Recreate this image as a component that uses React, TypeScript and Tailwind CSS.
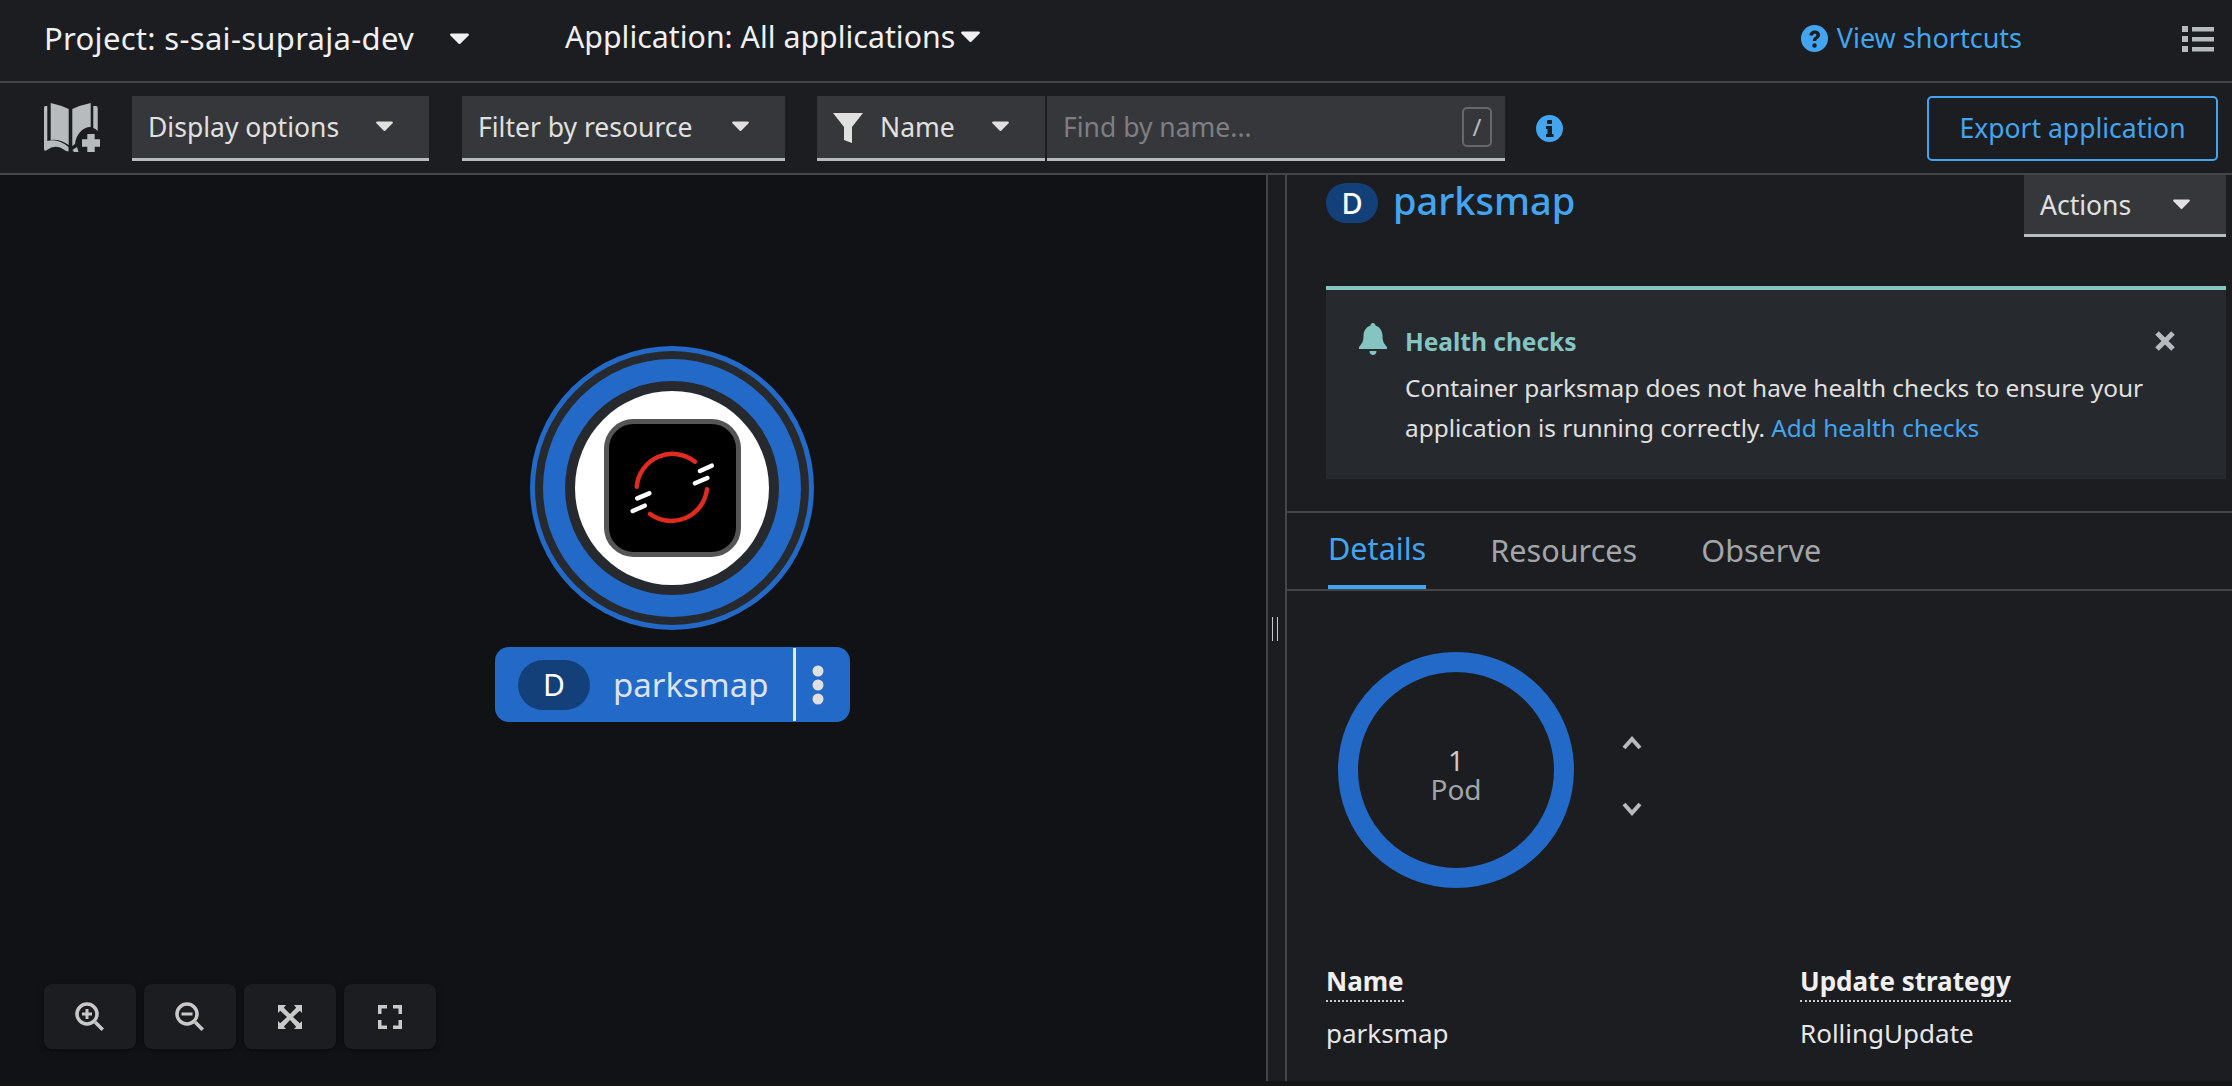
import React from "react";

const Caret = ({ c = "#e0e0e0", w = 16 }: { c?: string; w?: number }) => (
  <svg width={w} height={w * 0.62} viewBox="0 0 16 10"><path d="M1 0.5h14a1 1 0 0 1 .7 1.7L8.700 9.200a1 1 0 0 1-1.400 0L.3 2.200A1 1 0 0 1 1 .5z" fill={c} /></svg>
);

const Select = ({ label, w, icon }: { label: string; w: string; icon?: React.ReactNode }) => (
  <div className={`flex h-[65px] items-center justify-between border-b-[3px] border-[#b8bbbe] bg-[#36373b] pl-4 pr-[36px] text-[#e0e0e0] ${w}`}>
    <span className="flex items-center pt-[3px]">{icon}{label}</span>
    <Caret w={17} />
  </div>
);

const ZoomBtn = ({ children }: { children: React.ReactNode }) => (
  <div className="flex h-[65px] w-[92px] items-center justify-center rounded-lg bg-[#1b1d21] shadow-[0_2px_6px_rgba(0,0,0,0.4)]">
    <svg width="30" height="30" viewBox="0 0 30 30" fill="#c9c9c9">{children}</svg>
  </div>
);

export default function App() {
  return (
    <div className="flex h-[1086px] w-[2232px] flex-col overflow-hidden bg-[#101215] font-['Noto_Sans',sans-serif] text-[26.500px] text-[#e0e0e0]">
      {/* masthead */}
      <div className="flex h-[83px] shrink-0 items-center border-b-2 border-[#444548] bg-[#1b1d21] pb-[4px] text-[#f0f0f0]">
        <span className="ml-[44px] w-[406px] text-[31px] tracking-[0.3px]">Project: s-sai-supraja-dev</span>
        <Caret c="#f0f0f0" w={19} />
        <span className="ml-[96px] -mt-[3px] text-[30.300px]">Application: All applications</span>
        <span className="ml-[6px] -mt-[3px]"><Caret c="#f0f0f0" w={19} /></span>
        <div className="ml-auto flex items-center text-[27px] text-[#43a5f0]">
          <svg width="27" height="27" viewBox="0 0 27 27"><circle cx="13.500" cy="13.500" r="13.500" fill="#43a5f0" /><path d="M8.500 10.500c0-6.500 10.500-6.500 10.500-.5 0 3.500-3.800 3.500-3.800 6h-3.400c0-4 3.600-4 3.600-6 0-1.800-3.400-1.800-3.400.5z" fill="#1b1d21" /><circle cx="13.500" cy="20.500" r="2.200" fill="#1b1d21" /></svg>
          <span className="ml-[9px]">View shortcuts</span>
        </div>
        <svg className="ml-[160px] mr-[18px]" width="32" height="26" viewBox="0 0 32 26" fill="#b8bbbe"><rect x="0" y="0" width="6" height="6" /><rect x="10" y="1" width="22" height="4.500" /><rect x="0" y="10" width="6" height="6" /><rect x="10" y="11" width="22" height="4.500" /><rect x="0" y="20" width="6" height="6" /><rect x="10" y="21" width="22" height="4.500" /></svg>
      </div>

      {/* toolbar */}
      <div className="flex h-[92px] shrink-0 items-center border-b-2 border-[#444548] bg-[#1b1d21]">
        <svg className="ml-[44px]" width="56" height="50" viewBox="0 0 56 50" fill="#b8bbbe">
          <path d="M0 4.500Q0 3 1.500 3H3.300V38Q14 35 24.500 44V48.500L22 48Q12 40 3 47Q0 49 0 46Z" />
          <path d="M6.700 0Q16 2 24.700 6V42Q16 36 6.700 37Z" />
          <path d="M28.300 6Q37 2 46.700 0V24C38 24 32 32 31 41L28.300 43Z" />
          <path d="M49.300 3H52Q53.700 3 53.700 5V28Q51.500 25.500 49.300 25Z" />
          <path d="M28.500 47L33 44L34.500 49H30Z" />
          <path d="M43.300 31h7.400v5.300H56v7.400h-5.300V49h-7.400v-5.300H38v-7.400h5.300z" />
        </svg>
        <div className="ml-[32px]"><Select label="Display options" w="w-[297px]" /></div>
        <div className="ml-[33px]"><Select label="Filter by resource" w="w-[323px]" /></div>
        <div className="ml-[32px] flex items-center gap-[2px]">
          <Select
            label="Name"
            w="w-[228px]"
            icon={
              <svg className="mr-[17px]" width="30" height="30" viewBox="0 0 30 30" fill="#e0e0e0"><path d="M0 0h30L19 14v16l-8-3V14z" /></svg>
            }
          />
          <div className="flex h-[65px] w-[458px] items-center justify-between border-b-[3px] border-[#b8bbbe] bg-[#36373b] pl-4 pr-[13px] text-[#7d7f83]">
            <span className="pt-[3px]">Find by name...</span>
            <span className="flex h-[40px] w-[30px] items-center justify-center rounded-[5px] border-2 border-[#66686b] text-[24px] text-[#b8bbbe]">/</span>
          </div>
        </div>
        <svg className="ml-[31px]" width="27" height="27" viewBox="0 0 27 27"><circle cx="13.500" cy="13.500" r="13.500" fill="#43a5f0" /><rect x="11" y="5" width="5" height="4" rx="1" fill="#1b1d21" /><path d="M10 11h6v8h1.500v3h-7.500v-3h1.500v-5h-1.500z" fill="#1b1d21" /></svg>
        <div className="ml-auto mr-[14px] flex h-[65px] w-[291px] items-center justify-center rounded-[5px] border-2 border-[#43a5f0] pt-[2px] text-[#43a5f0]">Export application</div>
      </div>

      {/* main */}
      <div className="flex min-h-0 flex-1">
        {/* canvas */}
        <div className="relative w-[1268px] shrink-0 border-r-2 border-[#444548] bg-[#101215]">
          <svg className="absolute left-[530px] top-[171px]" width="284" height="284" viewBox="0 0 284 284">
            <circle cx="142" cy="142" r="142" fill="#2269c8" />
            <circle cx="142" cy="142" r="137" fill="#26292d" />
            <circle cx="142" cy="142" r="129" fill="#2269c8" />
            <circle cx="142" cy="142" r="107" fill="#26292d" />
            <circle cx="142" cy="142" r="97" fill="#ffffff" />
            <rect x="76.500" y="75.500" width="132" height="133" rx="27" fill="#000" stroke="#555" strokeWidth="5" />
            <path d="M106.700 140.700A36 36 0 0 1 165 115.700" fill="none" stroke="#e02b20" strokeWidth="4.500" strokeLinecap="round" />
            <path d="M177 143.300A36 36 0 0 1 120 168" fill="none" stroke="#e02b20" strokeWidth="4.500" strokeLinecap="round" />
            <path d="M170 125L181.700 119.700M165 137.300L177.300 132M107.300 152.300L119.300 147.300M102.700 165L114.700 159.700" stroke="#fff" strokeWidth="4.500" strokeLinecap="round" />
          </svg>

          <div className="absolute left-[495px] top-[472px] flex h-[75px] w-[355px] items-center rounded-[14px] bg-[#2269c8]">
            <span className="ml-[23px] flex h-[50px] w-[72px] items-center justify-center rounded-full bg-[#134078] text-[30px] text-white">D</span>
            <span className="ml-[23px] w-[180px] text-[33px] text-[#dde3ec]">parksmap</span>
            <span className="h-[73px] w-[3px] bg-[#e8e8e8]" />
            <svg className="ml-[16px]" width="12" height="40" viewBox="0 0 12 40" fill="#e0e0e0"><circle cx="6" cy="6" r="5.500" /><circle cx="6" cy="20" r="5.500" /><circle cx="6" cy="34" r="5.500" /></svg>
          </div>

          <div className="absolute bottom-[32px] left-[44px] flex gap-2">
            <ZoomBtn>
              <circle cx="12" cy="12" r="10" fill="none" stroke="#c9c9c9" strokeWidth="3.500" />
              <path d="M7 10.500h3.500V7h3v3.500H17v3h-3.500V17h-3v-3.500H7z" />
              <path d="M19 21.500l2.500-2.500L29 26.500 26.500 29z" />
            </ZoomBtn>
            <ZoomBtn>
              <circle cx="12" cy="12" r="10" fill="none" stroke="#c9c9c9" strokeWidth="3.500" />
              <rect x="6.500" y="10.500" width="11" height="3" />
              <path d="M19 21.500l2.500-2.500L29 26.500 26.500 29z" />
            </ZoomBtn>
            <ZoomBtn>
              <path d="M3 3h8L8.800 5.700 15 12l6.200-6.300L19 3h8v8l-2.200-2.200L18 15l6.800 6.200L27 19v8h-8l2.200-2.200L15 18l-6.200 6.800L11 27H3v-8l2.200 2.200L12 15 5.200 8.800 3 11z" />
            </ZoomBtn>
            <ZoomBtn>
              <path d="M3 3h9v3.500H6.500V12H3zM18 3h9v9h-3.500V6.500H18zM3 18h3.500v5.500H12V27H3zM23.500 18H27v9h-9v-3.500h5.500z" />
            </ZoomBtn>
          </div>
        </div>

        {/* splitter */}
        <div className="relative w-[17px] shrink-0 bg-[#1b1d21]">
          <div className="absolute left-[4px] top-[442px] flex h-[24px] gap-[4px]">
            <span className="h-full w-[1px] bg-[#c9c9c9]" />
            <span className="h-full w-[1px] bg-[#c9c9c9]" />
          </div>
        </div>

        {/* side panel */}
        <div className="flex min-w-0 flex-1 flex-col border-l-2 border-[#444548] bg-[#1b1d21]">
          <div className="flex h-[111px] shrink-0 items-start pl-[39px] pr-[6px]">
            <span className="mt-[8px] flex h-[40px] w-[52px] items-center justify-center rounded-full bg-[#134078] text-[29px] font-medium text-white">D</span>
            <span className="ml-[15px] text-[38px] font-medium leading-[50px] text-[#43a5f0]">parksmap</span>
            <div className="ml-auto flex h-[62px] w-[202px] items-center justify-between border-b-[3px] border-[#b8bbbe] bg-[#36373b] pl-4 pr-[36px] text-[#e0e0e0]">
              <span className="pt-[2px]">Actions</span>
              <Caret w={17} />
            </div>
          </div>

          <div className="ml-[39px] mr-[6px] flex h-[193px] shrink-0 items-start border-t-4 border-[#84c5c2] bg-[#26292d] pl-[33px] pr-[44px] pt-[33px] text-[24.400px]">
            <svg width="28" height="32" viewBox="0 0 28 32" fill="#84c5c2"><path d="M14 0c1.500 0 2.400 1 2.400 2.500C21 4 23.500 8 23.500 13c0 6 2 8 4.500 11v2H0v-2c2.500-3 4.500-5 4.500-11 0-5 2.500-9 7-10.500C11.500 1 12.500 0 14 0z" /><path d="M10.500 28h7c0 2.500-1.500 4-3.500 4s-3.500-1.500-3.500-4z" /></svg>
            <div className="ml-[18px] min-w-0 flex-1">
              <div className="text-[24.500px] font-bold leading-[38px] text-[#84c5c2]">Health checks</div>
              <div className="mt-[7px] leading-[40px] text-[#e0e0e0]">Container parksmap does not have health checks to ensure your</div>
              <div className="leading-[40px] text-[#e0e0e0]">application is running correctly. <span className="text-[#43a5f0]">Add health checks</span></div>
            </div>
            <svg className="mr-[7px] mt-[8px]" width="20" height="20" viewBox="0 0 20 20" stroke="#b8bbbe" strokeWidth="5"><path d="M2 2l16 16M18 2L2 18" /></svg>
          </div>

          <div className="mt-[32px] flex h-[80px] shrink-0 items-stretch gap-[64px] border-y-2 border-[#444548] pl-[41px] text-[30.600px] text-[#a3a5a8]">
            <div className="flex items-center border-b-4 border-[#43a5f0] text-[#43a5f0]">Details</div>
            <div className="flex items-center">Resources</div>
            <div className="flex items-center">Observe</div>
          </div>

          <div className="flex h-[371px] shrink-0 items-start pl-[51px] pt-[61px]">
            <div className="relative h-[236px] w-[236px] shrink-0 rounded-full border-[20px] border-[#2269c8]">
              <div className="absolute inset-0 flex flex-col items-center justify-center pt-[10px] text-[28px] leading-[29px] text-[#c9c9c9]">
                <span>1</span>
                <span className="text-[#a3a5a8]">Pod</span>
              </div>
            </div>
            <div className="ml-[48px] mt-[84px] flex flex-col gap-[52px]">
              <svg width="20" height="14" viewBox="0 0 20 14" fill="none" stroke="#b8bbbe" strokeWidth="4"><path d="M2 12l8-9 8 9" /></svg>
              <svg width="20" height="14" viewBox="0 0 20 14" fill="none" stroke="#b8bbbe" strokeWidth="4"><path d="M2 2l8 9 8-9" /></svg>
            </div>
          </div>

          <div className="grid grid-cols-[474px_1fr] pl-[39px] text-[26px]">
            <div>
              <div className="inline-block border-b-2 border-dotted border-[#c9c9c9] font-bold leading-[38px] text-[#f0f0f0]">Name</div>
              <div className="mt-[12px] leading-[38px] text-[#e8e8e8]">parksmap</div>
            </div>
            <div>
              <div className="inline-block border-b-2 border-dotted border-[#c9c9c9] font-bold leading-[38px] text-[#f0f0f0]">Update strategy</div>
              <div className="mt-[12px] leading-[38px] text-[#e8e8e8]">RollingUpdate</div>
            </div>
          </div>
        </div>
      </div>
      <div className="h-[5px] shrink-0 bg-[#131517]" />
    </div>
  );
}
